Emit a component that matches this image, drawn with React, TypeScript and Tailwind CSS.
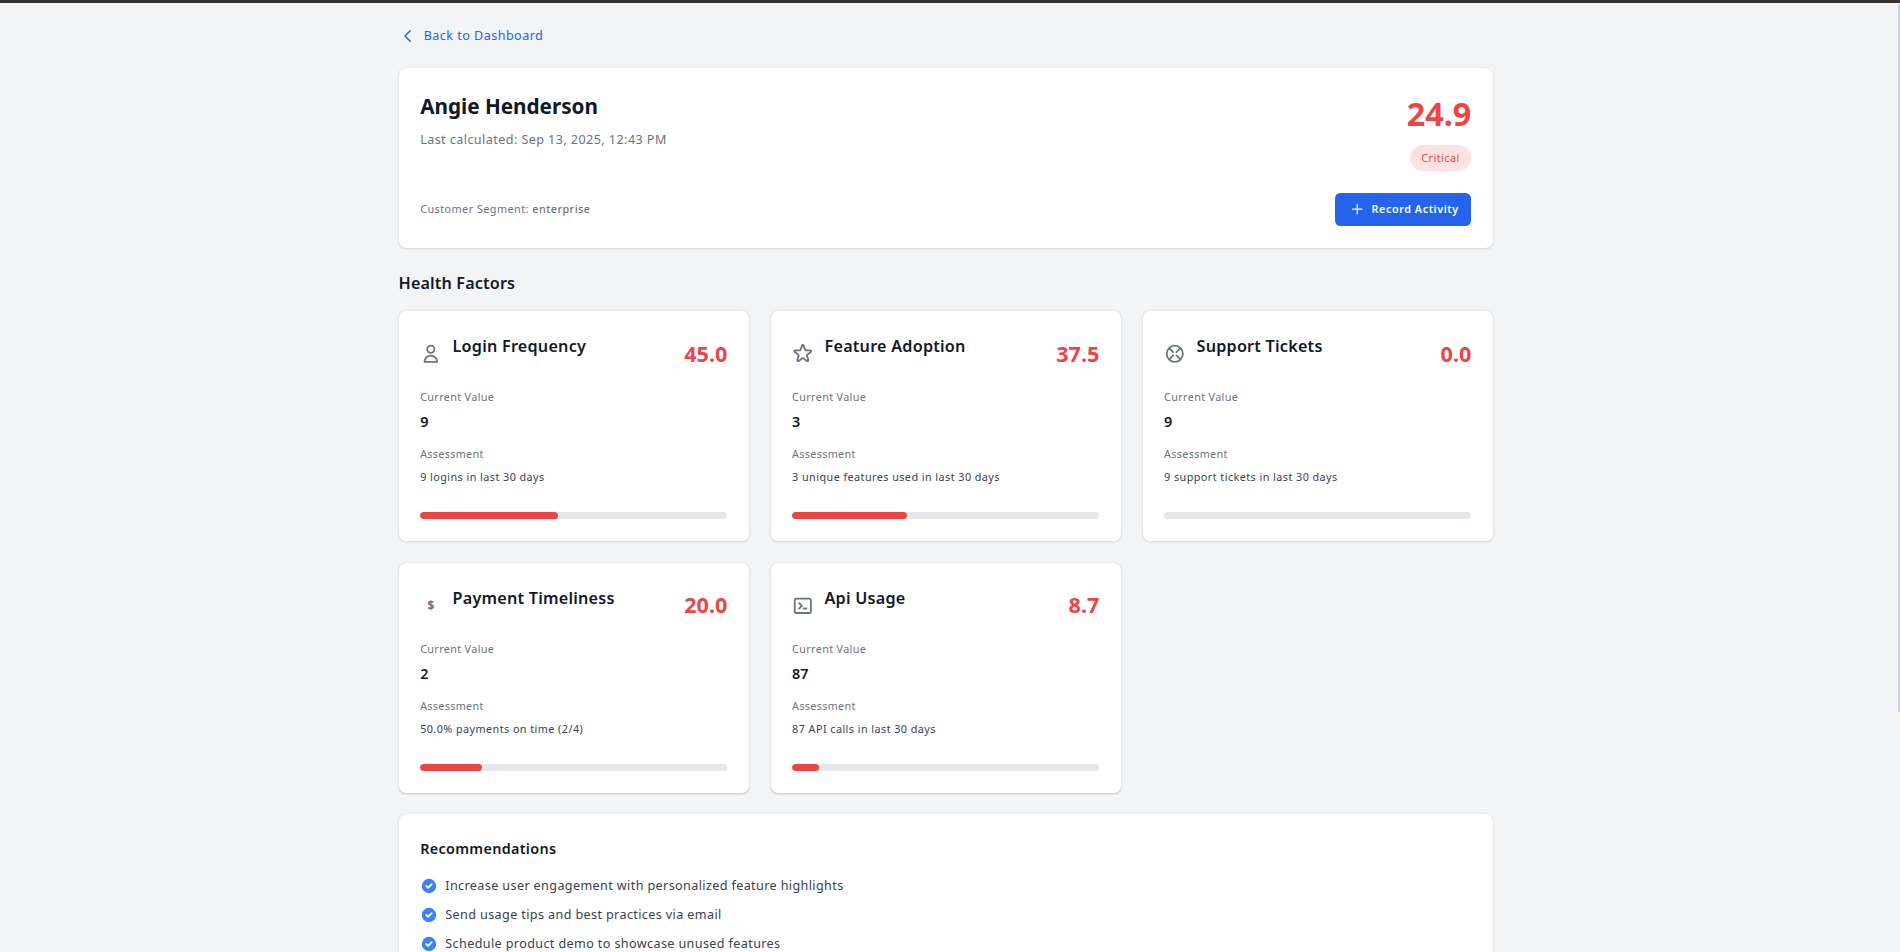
import React from "react";

const P = ({ d, c = "w-6 h-6" }: { d: string; c?: string }) => (
  <svg className={c} fill="none" viewBox="0 0 24 24" stroke="currentColor" strokeWidth={2} strokeLinecap="round" strokeLinejoin="round">
    <path d={d} />
  </svg>
);

const icons: Record<string, React.ReactNode> = {
  user: <P d="M16 7a4 4 0 11-8 0 4 4 0 018 0zM12 14a7 7 0 00-7 7h14a7 7 0 00-7-7z" />,
  star: <P d="M11.049 2.927c.3-.921 1.603-.921 1.902 0l1.519 4.674a1 1 0 00.95.69h4.915c.969 0 1.371 1.24.588 1.81l-3.976 2.888a1 1 0 00-.363 1.118l1.518 4.674c.3.922-.755 1.688-1.538 1.118l-3.976-2.888a1 1 0 00-1.176 0l-3.976 2.888c-.783.57-1.838-.197-1.538-1.118l1.518-4.674a1 1 0 00-.363-1.118l-3.976-2.888c-.784-.57-.38-1.81.588-1.81h4.914a1 1 0 00.951-.69l1.519-4.674z" />,
  support: <P d="M18.364 5.636L13.8 10.2m0 3.6l4.564 4.564M10.2 10.2L5.636 5.636m4.564 8.164l-4.564 4.564M21 12a9 9 0 11-18 0 9 9 0 0118 0z" />,
  dollar: <span className="flex h-6 w-6 items-center justify-center text-[13px] font-extrabold">$</span>,
  terminal: <P d="M8 9l3 3-3 3m5 0h3M5 20h14a2 2 0 002-2V6a2 2 0 00-2-2H5a2 2 0 00-2 2v12a2 2 0 002 2z" />,
};

const factors = [
  { icon: "user", name: "Login Frequency", score: "45.0", value: "9", text: "9 logins in last 30 days", pct: 45 },
  { icon: "star", name: "Feature Adoption", score: "37.5", value: "3", text: "3 unique features used in last 30 days", pct: 37.5 },
  { icon: "support", name: "Support Tickets", score: "0.0", value: "9", text: "9 support tickets in last 30 days", pct: 0 },
  { icon: "dollar", name: "Payment Timeliness", score: "20.0", value: "2", text: "50.0% payments on time (2/4)", pct: 20 },
  { icon: "terminal", name: "Api Usage", score: "8.7", value: "87", text: "87 API calls in last 30 days", pct: 8.7 },
];

const recs = [
  "Increase user engagement with personalized feature highlights",
  "Send usage tips and best practices via email",
  "Schedule product demo to showcase unused features",
];

function FactorCard({ f }: { f: (typeof factors)[number] }) {
  return (
    <div className="rounded-lg bg-white p-6 shadow">
      <div className="flex h-12 items-center justify-between">
        <div className="flex items-center">
          <div className="mr-3 text-[#6b7280]">{icons[f.icon]}</div>
          <div className="h-12 pt-[2px] text-lg font-semibold tracking-[0.25px] text-[#111827]">{f.name}</div>
        </div>
        <div className="text-2xl font-bold text-[#ef4444]">{f.score}</div>
      </div>
      <div className="mt-4 text-xs tracking-[0.4px] text-[#6b7280]">Current Value</div>
      <div className="mt-2 text-base font-semibold text-[#111827]">{f.value}</div>
      <div className="mt-4 text-xs tracking-[0.35px] text-[#6b7280]">Assessment</div>
      <div className="mt-[9px] text-xs tracking-[0.5px] text-[#374151]">{f.text}</div>
      <div className="mt-[31px] h-2 overflow-hidden rounded-full bg-[#e5e7eb]">
        <div className="h-full rounded-full bg-[#ef4444]" style={{ width: `${f.pct}%` }} />
      </div>
    </div>
  );
}

export default function App() {
  return (
    <div className="relative h-[952px] w-full overflow-hidden bg-[#f3f4f6] [font-family:'Noto_Sans',sans-serif]">
      <div className="h-[3px] bg-[#333333]" />
      <div className="absolute right-0 top-[4px] h-[708px] w-[2px] bg-[#cbd5e1]" />
      <div className="pr-[9.5px] [zoom:0.9]">
        <div className="mx-auto max-w-[1216px] py-6">
          <a className="mb-[22px] flex h-[26px] items-center text-sm tracking-[0.5px] text-[#2563eb]">
            <P d="M15 19l-7-7 7-7" c="mr-2 h-5 w-5" />
            Back to Dashboard
          </a>
          <div className="rounded-lg bg-white p-6 shadow">
            <div className="flex items-start justify-between">
              <div>
                <h1 className="mt-[3px] text-[23px] leading-8 font-bold text-[#111827]">Angie Henderson</h1>
                <p className="mt-[11px] text-sm tracking-[0.47px] text-[#6b7280]">Last calculated: Sep 13, 2025, 12:43 PM</p>
              </div>
              <div className="mt-[6px] text-right">
                <div className="text-4xl font-bold text-[#ef4444]">24.9</div>
                <span className="mt-4 inline-flex rounded-full bg-[#fee2e2] px-[13px] py-[6.5px] text-xs tracking-[0.5px] text-[#ef4444]">Critical</span>
              </div>
            </div>
            <div className="mt-6 flex items-center justify-between">
              <div className="text-xs tracking-[0.53px] text-[#6b7280]">
                Customer Segment: <span className="font-medium">enterprise</span>
              </div>
              <button className="inline-flex h-[37px] items-center rounded-md bg-[#2563eb] pl-[17px] pr-[14px] text-xs font-semibold tracking-[0.63px] text-white">
                <svg className="mr-2 h-4 w-4" viewBox="0 0 24 24" fill="none" stroke="currentColor" strokeWidth={2} strokeLinecap="round"><path d="M12 4v16m8-8H4" /></svg>
                Record Activity
              </button>
            </div>
          </div>
          <h2 className="mb-4 mt-[26px] text-lg font-semibold tracking-[0.15px] text-[#111827]">Health Factors</h2>
          <div className="grid grid-cols-3 gap-6">
            {factors.map((f) => <FactorCard key={f.name} f={f} />)}
          </div>
          <div className="mt-6 rounded-lg bg-white p-6 shadow">
            <h3 className="text-base font-semibold leading-7 tracking-[0.35px] text-[#111827]">Recommendations</h3>
            <ul className="mt-[18px] space-y-3">
              {recs.map((r) => (
                <li key={r} className="flex items-center text-sm tracking-[0.42px] text-[#374151]">
                  <svg className="mr-2 h-5 w-5 text-[#3b82f6]" viewBox="0 0 20 20" fill="currentColor"><path fillRule="evenodd" clipRule="evenodd" d="M10 18a8 8 0 100-16 8 8 0 000 16zm3.707-9.293a1 1 0 00-1.414-1.414L9 10.586 7.707 9.293a1 1 0 00-1.414 1.414l2 2a1 1 0 001.414 0l4-4z" /></svg>
                  {r}
                </li>
              ))}
            </ul>
          </div>
        </div>
      </div>
    </div>
  );
}
